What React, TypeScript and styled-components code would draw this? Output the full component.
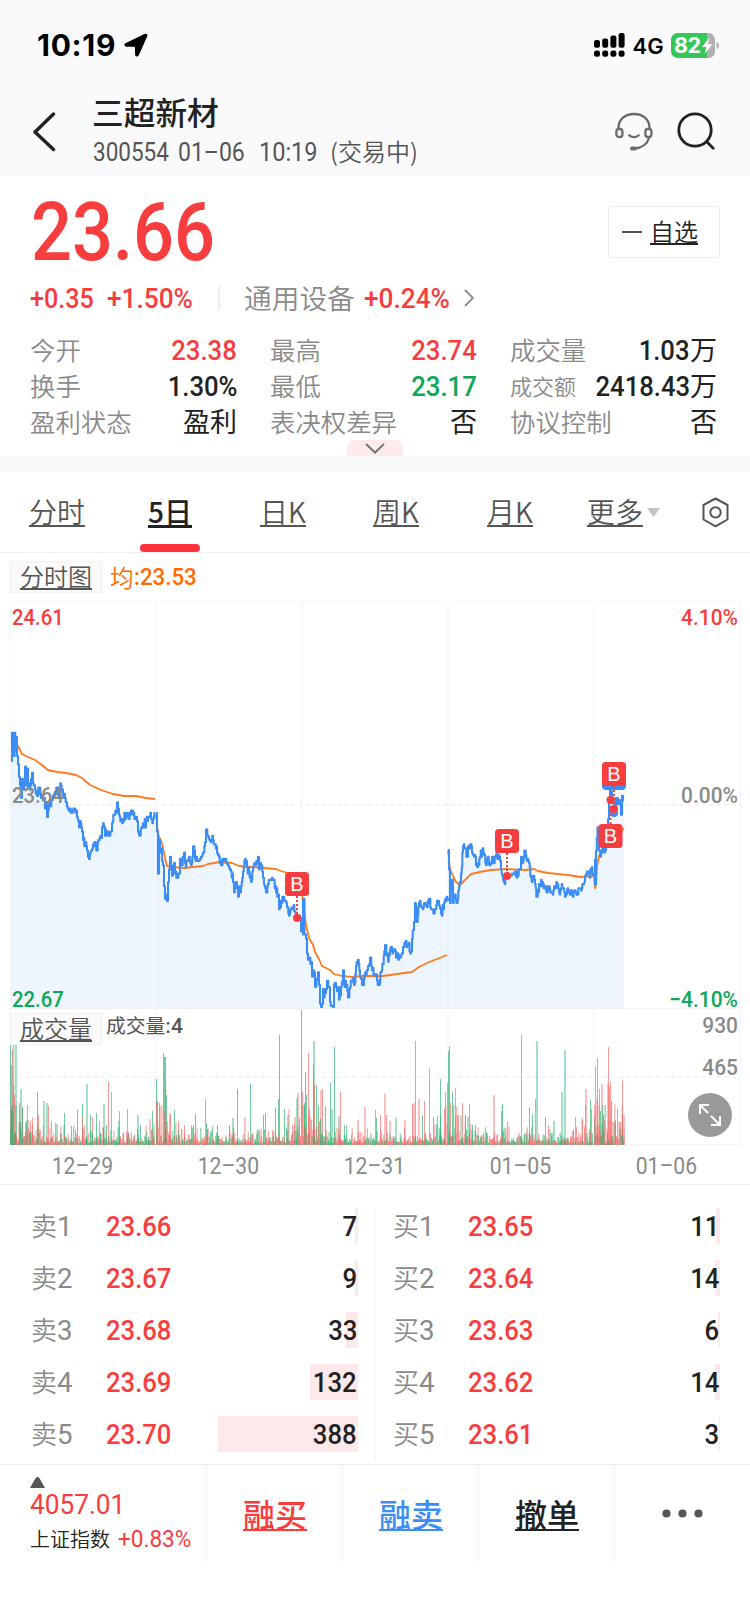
import React from "react";
import styled, { createGlobalStyle } from "styled-components";

const RED = "#f73d3d";
const GREEN = "#0aa858";
const BLUE = "#3c8df5";
const ORANGE = "#ff6a00";
const INK = "#222";
const MID = "#555";
const GREY = "#8a8a8a";
const NUM = `Roboto, "Noto Sans CJK SC", sans-serif`;
const CJK = `"Noto Sans CJK SC", sans-serif`;

const GlobalStyle = createGlobalStyle`
  * { box-sizing: border-box; }
  body { margin: 0; background: #fff; font-family: ${CJK}; color: ${INK}; }
`;

const Page = styled.div`
  width: 750px;
  height: 1624px;
  display: flex;
  flex-direction: column;
  overflow: hidden;
  background: #fff;
`;

/* Condensed figures, narrowed towards the edge they are aligned to. */
const Num = styled.span<{
  $size?: number;
  $color?: string;
  $weight?: number;
  $narrow?: number;
  $to?: "left" | "right" | "center";
}>`
  display: inline-block;
  font-family: ${NUM};
  font-size: ${(p) => p.$size ?? 28.5}px;
  font-weight: ${(p) => p.$weight ?? 500};
  color: ${(p) => p.$color ?? "inherit"};
  transform: scaleX(${(p) => p.$narrow ?? 0.9});
  transform-origin: ${(p) => p.$to ?? "left"} center;
  white-space: nowrap;
`;

/* ---------- status bar and header ---------- */

const StatusBar = styled.div`
  flex: none;
  height: 88px;
  padding: 2px 30.5px 0 37px;
  display: flex;
  align-items: center;
  background: #fafafc;
  color: #000;
  font-family: Inter, sans-serif;
`;
const Clock = styled.span`
  width: 87px;
  font-size: 30px;
  line-height: 30px;
  font-weight: 700;
  letter-spacing: 0.7px;
`;
const StatusRight = styled.div`
  margin-left: auto;
  display: flex;
  align-items: center;
`;
const Network = styled.span`
  margin: 2px 8px 0 8px;
  width: 30px;
  font-size: 22px;
  font-weight: 600;
`;

const Header = styled.header`
  flex: none;
  height: 88px;
  padding: 0 35px 0 32px;
  display: flex;
  align-items: flex-start;
  background: #fafafc;
`;
const TitleBlock = styled.div`
  margin-left: 36px;
  flex: 1;
`;
const Title = styled.h1`
  margin: 0;
  font-size: 31.7px;
  line-height: 46px;
  font-weight: 500;
`;
const Subtitle = styled.div`
  display: flex;
  height: 36px;
  align-items: center;
  padding-left: 1px;
  color: ${MID};
`;
const SubPart = styled.div<{ $w: number }>`
  width: ${(p) => p.$w}px;
`;
const Session = styled.span`
  font-family: ${CJK};
  font-size: 24px;
  line-height: 30px;
  margin: -3px 0 0 2px;
  font-weight: 350;
`;
const HeaderIcons = styled.div`
  display: flex;
  gap: 24px;
  padding-top: 24px;
`;

/* ---------- quote ---------- */

const Quote = styled.section`
  position: relative;
  flex: none;
  height: 280px;
  padding: 16px 30px 0;
`;
const PriceRow = styled.div`
  display: flex;
  height: 80px;
  justify-content: space-between;
`;
const BigPrice = styled(Num)`
  line-height: 81px;
  margin-left: 1px;
`;
const WatchButton = styled.button`
  margin: 14px 0 0;
  width: 112px;
  height: 52px;
  padding: 0 0 0 13px;
  display: flex;
  align-items: center;
  gap: 8px;
  border: 1px solid #ebebeb;
  border-radius: 4px;
  background: #fff;
`;
const Dash = styled.i`
  width: 20px;
  height: 2px;
  background: ${MID};
`;
const Underlined = styled.span<{ $size: number; $color?: string; $weight?: number; $line?: number }>`
  display: inline-block;
  font-family: ${CJK};
  font-size: ${(p) => p.$size}px;
  line-height: ${(p) => p.$size}px;
  font-weight: ${(p) => p.$weight ?? 350};
  color: ${(p) => p.$color ?? MID};
  border-bottom: ${(p) => p.$line ?? 2}px solid currentColor;
  white-space: nowrap;
`;
const ChangeRow = styled.div`
  display: flex;
  height: 52px;
  align-items: center;
  color: ${RED};
`;
const ChangePart = styled.div<{ $w: number }>`
  width: ${(p) => p.$w}px;
`;
const Rule = styled.i`
  width: 2px;
  height: 24px;
  margin-right: 24px;
  background: #ececec;
`;
const Sector = styled.span`
  width: 120px;
  font-size: 27.7px;
  line-height: 40px;
  margin-top: -3px;
  font-weight: 350;
  color: ${GREY};
`;
const Stats = styled.div`
  margin-top: 8px;
  display: grid;
  grid-template-columns: repeat(3, 207px);
  column-gap: 33px;
  grid-auto-rows: 36px;
`;
const Stat = styled.div`
  display: flex;
  align-items: center;
  line-height: 36px;
  padding-bottom: 2px;
`;
const StatValue = styled(Num)`
  margin-top: 3px;
`;
const StatLabel = styled.span<{ $size: number }>`
  flex: 1;
  white-space: nowrap;
  font-size: ${(p) => p.$size}px;
  font-weight: 350;
  color: ${GREY};
`;
const PullTab = styled.div`
  position: absolute;
  left: 347px;
  bottom: 0;
  width: 56px;
  height: 16px;
  display: flex;
  justify-content: center;
  border-radius: 8px 8px 0 0;
  background: #fdebeb;
`;
const Spacer = styled.div`
  flex: none;
  height: 16px;
  background: #f9f9fb;
`;

/* ---------- tabs ---------- */

const Tabs = styled.nav`
  flex: none;
  height: 81px;
  display: grid;
  grid-template-columns: 114px 112px 114px 112px 116px 182px;
  border-bottom: 1px solid #f0f0f0;
`;
const Tab = styled.div`
  display: flex;
  flex-direction: column;
  align-items: center;
  justify-content: space-between;
  padding-top: 25px;
`;
const Indicator = styled.i`
  width: 60px;
  height: 8px;
  border-radius: 4px;
  background: #fd323d;
`;
const MoreTab = styled.div`
  display: flex;
  align-items: flex-start;
  padding: 25px 0 0 19px;
`;

/* ---------- chart ---------- */

const LegendRow = styled.div`
  flex: none;
  height: 47px;
  padding: 8px 10px;
  display: flex;
  align-items: center;
`;
const LegendBox = styled.div`
  width: 92px;
  height: 32px;
  display: flex;
  justify-content: center;
  align-items: center;
  border: 1px solid #f2f2f2;
  background: #fafafa;
`;
const Average = styled.div`
  margin: 1px 0 0 8px;
  display: flex;
  align-items: center;
  font-size: 23.7px;
  line-height: 32px;
  font-weight: 350;
  color: ${ORANGE};
`;
const ChartArea = styled.div`
  position: relative;
  flex: none;
  height: 546px;
`;
const VolumeLegend = styled.div`
  position: absolute;
  left: 10px;
  top: 413px;
  display: flex;
  gap: 4px;
`;
const VolumeText = styled.span`
  font-size: 19.8px;
  line-height: 24px;
  font-weight: 400;
  color: ${MID};
`;
const Dates = styled.div`
  flex: none;
  height: 39px;
  padding: 3px 11px 0 9px;
  display: grid;
  grid-template-columns: repeat(5, 146px);
  align-items: center;
  justify-items: center;
  border-bottom: 1px solid #eee;
  color: ${GREY};
`;

/* ---------- order book ---------- */

const Book = styled.section`
  flex: none;
  height: 279px;
  padding: 23px 30px 3px;
  display: grid;
  grid-template-columns: 328px 34px 328px;
`;
const Divider = styled.i`
  justify-self: center;
  width: 1px;
  margin-left: 1px;
  background: #f3f3f3;
`;
const Side = styled.div`
  display: flex;
  flex-direction: column;
  gap: 16px;
`;
const Level = styled.div`
  display: flex;
  height: 36px;
  align-items: center;
`;
const LevelName = styled.div`
  width: 76px;
  display: flex;
  align-items: center;
  padding-left: 1px;
  color: ${GREY};
`;
const Han = styled.span<{ $size: number; $weight?: number; $up?: number }>`
  font-family: ${CJK};
  font-size: ${(p) => p.$size}px;
  line-height: 36px;
  font-weight: ${(p) => p.$weight ?? 350};
  margin-top: ${(p) => -(p.$up ?? 0)}px;
`;
const Depth = styled.div<{ $bar: number }>`
  flex: 1;
  height: 36px;
  line-height: 37px;
  padding-right: 1px;
  text-align: right;
  background: linear-gradient(#fee9ea, #fee9ea) right / ${(p) => p.$bar}px 100% no-repeat;
`;

/* ---------- bottom bar ---------- */

const Bottom = styled.footer`
  flex: none;
  height: 99px;
  display: grid;
  grid-template-columns: 207px repeat(4, 136px);
  border-top: 1px solid #ececec;
`;
const Index = styled.div`
  padding: 12px 0 0 30px;
  display: flex;
  flex-direction: column;
  border-right: 1px solid #f2f2f2;
`;
const IndexValue = styled(Num)`
  line-height: 32px;
  margin-top: 1px;
`;
const IndexName = styled.div`
  display: flex;
  align-items: center;
  gap: 8px;
  height: 36px;
`;
const Action = styled.div`
  display: flex;
  justify-content: center;
  align-items: flex-start;
  padding: 32px 0 0 1px;
  border-right: 1px solid #f2f2f2;
  &:last-child { border-right: 0; padding: 44px 0 0; }
`;

/* ---------- chart data ---------- */

type Pt = [number, number];
const parse = (s: string): Pt[] =>
  s.trim().split(/\s+/).map((p) => p.split(",").map(Number) as Pt);

const rand = (seed: number) => {
  let s = seed;
  return () => {
    s = (s * 1664525 + 1013904223) % 4294967296;
    return s / 4294967296;
  };
};

const PRICE = [
  parse(`11,761 12,732 12.6,754 13.3,733 14,756 14.6,732 15.3,750 16,737 17,757 18,765 19,778 20,786 21,798 22,780 23,790 24,780 25,767 26,785 27,769 28,787 30,785 31,779 32,772 33,784 35,789 37,796 39,788 41,797 43,800 44,798 45,808 46,802 47,817 48,810 50,803 52,800 55,792 57,789 59,796 61,785 63,796 65,797 67,807 70,809 72,813 76,811 77,817 79,828 80,822 82,832 83,840 85,845 87,850 88,856 89,858 91,850 93,844 95,842 97,850 99,839 101,838 102,828 103,824 105,835 107,831 109,836 111,832 112,824 114,815 116,812 117,803 118,808 119,815 121,818 123,820 125,815 127,812 129,818 131,811 133,815 135,820 137,822 138,831 140,836 142,828 144,824 146,822 148,816 151,818 153,820 155,813`),
  parse(`156,813 157,832 158,873 159,840 160,852 161,848 162,860 163,865 164,887 165,898 166,895 167,900 168,883 169,870 170,857 171,866 172,876 173,866 174,864 175,873 177,877 179,873 180,859 182,866 184,852 185,863 187,862 189,857 191,866 193,847 195,858 197,860 199,860 201,856 203,853 205,843 206,829 208,836 210,841 213,839 215,845 217,852 219,857 221,865 224,862 227,863 229,868 231,871 233,881 234,892 236,883 237,887 238,896 239,886 240,893 241,887 243,872 245,859 247,868 249,872 251,881 253,868 255,865 257,864 258,857 259,869 261,865 263,877 264,885 266,893 268,884 270,880 272,877 274,880 276,893 278,894 279,909 281,901 283,896 285,901 287,908 289,915 291,909 293,910 295,911 297,918 299,916 300,918 301,932`),
  parse(`302,900 303,934 303.6,898 304.5,935 306,939 307,953 308,960 309,957 311,962 312,977 314,972 315,988 317,978 318,972 319,985 320,1003 321,1007 322,1003 323,990 324,997 326,989 327,981 329,988 330,1001 332,1006 333,1007 334,985 336,987 337,992 338,987 339,999 341,988 343,970 344,985 346,984 348,997 350,987 352,980 354,985 356,966 358,960 360,976 362,984 364,979 366,975 368,965 370,958 372,970 375,975 377,981 379,985 381,972 383,964 385,945 387,954 388,962 390,950 394,950 396,958 399,957 401,955 403,947 405,944 408,946 411,951 412,938 414,922 415,902 417,921 419,903 422,907 424,903 427,907 429,898 431,910 434,914 437,900 439,905 441,914 444,903 446,900 448,900`),
  parse(`448,850 449,870 450,903 452,880 453,902 455,895 457,903 459,886 461,874 463,847 465,849 467,857 468,847 470,844 472,853 474,857 478,864 480,857 482,851 484,855 486,865 488,857 490,865 492,857 494,863 496,854 498,857 500,862 501,870 503,880 504,883 506,877 508,874 510,876 514,874 518,876 520,870 521,856 523,860 525,851 527,862 529,864 531,877 533,876 535,884 537,897 539,885 541,880 543,884 546,891 549,887 552,893 554,886 557,884 559,892 561,888 563,889 565,897 567,890 569,893 572,894 575,890 577,894 579,888 581,890 583,885 585,876 587,872 589,874 591,870 593,875`),
  parse(`594,860 595,884 596,850 597.5,828 599,851 601,853 603,848 605,850 606,846 608,820 609,800 610,785 611,792 612,801 613,798 615,812 616,797 617,797 618,805 619,801 620,805 621,815 622,795 623,801 624,800`),
];
const TICK = 2.1;
// Minute prices move in whole ticks around the listed turning points.
const pricePath = (pts: Pt[], seed: number) => {
  const r = rand(seed);
  let d = `M${pts[0][0]},${pts[0][1]}`;
  for (let i = 1; i < pts.length; i++) {
    const [x0, y0] = pts[i - 1];
    const [x1, y1] = pts[i];
    const n = Math.max(1, Math.round((x1 - x0) / 0.7));
    for (let k = 1; k <= n; k++) {
      const t = k / n;
      const jitter = k === n ? 0 : (r() - 0.5) * 9;
      const y = Math.min(1007, Math.round((y0 + (y1 - y0) * t + jitter) / TICK) * TICK);
      const x = x0 + (x1 - x0) * t;
      d += ` H${x.toFixed(1)} V${y.toFixed(1)}`;
    }
  }
  return d;
};
const PRICE_PATHS = PRICE.map((p, i) => pricePath(p, 17 + i * 31));

const AVERAGE = [
  "M16,745 L18,746 22,754 28,757 35,760 42,765 48,770 57,772 66,773 76,775 82,778 90,785 101,790 113,794 124,796 136,796 146,798 155,799",
  "M156,815 L158,834 162,843 165,858 167,866 172,867 185,868 193,867 203,866 208,864 220,862 232,863 239,866 251,867 264,868 276,869 281,871 288,873 296,880 301,892",
  "M302,893 L304,910 306,925 309,938 313,945 315,952 319,959 322,966 330,970 334,974 342,976 352,977 363,976 383,976 397,974 412,972 419,967 427,963 437,959 447,955",
  "M448,850 L450,869 453,876 456,882 460,885 463,882 467,878 471,874 480,872 491,870 506,869 526,870 534,869 538,871 548,873 558,874 568,875 580,877 594,876",
  "M594,875 L595,888 596,885 597,866 599,856 603,852 608,846 614,838 624,828",
];

type Bar = { x: number; h: number; c: string; w: number; o: number };
const spikes = (s: string): Bar[] =>
  s.trim().split(/\s+/).map((t) => {
    const [k, x, h] = t.split(":");
    return {
      x: Number(x),
      h: Number(h),
      c: k[0] === "r" ? "#f76262" : "#22b06c",
      w: k.length > 1 ? 2 : 1,
      o: k.length > 1 ? 0.4 : 0.65,
    };
  });
const SPIKES = spikes(`
g:10:100 r:11:80 r:12:95 gg:12.5:106 gg:15:108 r:13:60 r:14:50 g:19:42 gg:20:56 r:22:38 gg:25:22 r:27:40 r:30:24 r:32:20 g:37:53 r:38:30
gg:43:44 gg:46:42 r:48:39 r:51:24 r:55:22 gg:56:21 g:64:32 g:71:19 g:77:35 g:82:41 r:82:27 gg:86:61 g:90:30 r:92:28 g:96:32 r:99:24
gg:103:41 g:106:20 r:108:64 r:111:53 gg:118:24 r:119:34 r:127:36 gg:137:30 g:140:20 rr:149:26 g:152:34
g:156:66 g:157:44 r:156:44 r:159:42 g:163:92 g:164:88 g:165:88 g:166:50 r:165:60 rr:169:32 g:174:35 r:178:24 r:184:20 r:191:20 g:195:31 r:205:46 g:206:22 g:217:20
gg:232:27 g:237:56 rr:244:28 g:250:61 g:229:20 gg:257:16 g:263:30 g:265:32 g:275:37 g:279:110 g:278:46 g:284:36 gg:287:30 rr:294:28 gg:296:47 rr:297:52 g:299:27
g:301:135 r:302:53 g:304:42 g:305:73 r:308:92 g:306:50 r:309:36 gg:313:104 g:313:80 r:314:61 g:316:60 g:318:40 rr:320:55 r:322:56 g:325:39 g:330:62 gg:331:36 g:334:98 r:340:53
gg:338:29 g:344:20 rr:357:25 rr:364:38 r:375:35 g:376:27 r:380:30 rr:384:51 r:386:30 rr:389:24 gg:395:27 rr:404:25 r:412:41 rr:413:42 r:415:104 rr:418:46 g:422:30 r:424:44 r:429:77 g:433:28 g:440:66 r:444:36 r:445:53
r:447:62 g:448:94 g:449:99 g:452:53 r:450:42 r:455:57 rr:457:30 g:465:30 r:462:42 gg:467:28 r:469:41 g:472:20 rr:493:50 g:501:34 g:502:41 r:507:24 r:521:110 g:529:38 g:532:31 r:535:46 gg:536:104 g:545:28 r:548:20 gg:553:24
gg:561:53 gg:564:95 r:575:28 r:582:25 rr:585:56 g:590:45 r:591:36
r:595:79 r:597:87 g:594:28 r:599:56 rr:596:46 rr:601:61 g:600:34 g:603:30 r:608:98 rr:607:62 r:610:63 g:611:44 r:609:58 g:615:25 r:617:37 g:622:31 r:622:65 rr:623:30`);

const NOISE: Bar[] = (() => {
  const r = rand(913);
  const out: Bar[] = [];
  for (let x = 10; x < 623.5; x += 0.608) {
    const inDay = (x - 10) % 146;
    if (inDay > 144.6) continue;
    const open = Math.exp(-inDay / 12);
    const close = inDay > 132 ? 6 : 0;
    const h = 2 + -Math.log(1 - r() * 0.97) * (5 + open * 14 + close + (x > 594 ? 8 : 0));
    out.push({ x, h: Math.min(h, 40), c: r() > 0.4 ? "#f96a6a" : "#22b06c", w: 1, o: 0.7 });
  }
  return out;
})();

const MARKERS = [
  { bx: 297, by: 884, dx: 297, dy: 918 },
  { bx: 507, by: 841, dx: 507, dy: 876 },
  { bx: 614, by: 774, dx: 614, dy: 809 },
  { bx: 610.5, by: 836, dx: 610.5, dy: 800 },
];

const AXIS_LABELS = [
  { x: 12, y: 624.5, t: "24.61", c: RED },
  { x: 12, y: 803, t: "23.64", c: GREY },
  { x: 12, y: 1007, t: "22.67", c: GREEN },
  { x: 738, y: 624.5, t: "4.10%", c: RED, end: true },
  { x: 738, y: 803, t: "0.00%", c: GREY, end: true },
  { x: 738, y: 1007, t: "−4.10%", c: GREEN, end: true },
  { x: 738, y: 1033, t: "930", c: GREY, end: true },
  { x: 738, y: 1075, t: "465", c: GREY, end: true },
];

function Chart() {
  return (
    <svg width="750" height="546" viewBox="0 600 750 546" style={{ display: "block" }}>
      <g stroke="#f5f6f7" strokeWidth="1" fill="none">
        <path d="M10,601.5 H740 M10,1008.5 H740 M10,1144.5 H740" />
        <path d="M10.5,601 V1145 M156,601 V1145 M302,601 V1145 M448,601 V1145 M594,601 V1145 M740.5,601 V1145" strokeWidth="1.2" />
        <path d="M10,804.7 H740 M10,1077 H740" strokeDasharray="4 3.6" strokeWidth="1.6" stroke="#f0f0f1" />
      </g>
      {PRICE_PATHS.map((d, i) => {
        const pts = PRICE[i];
        return <path key={i} d={`${d} V1008.5 H${pts[0][0]} Z`} fill="#3c92f0" fillOpacity="0.09" />;
      })}
      {AVERAGE.map((d, i) => (
        <path key={i} d={d} fill="none" stroke="#ff7a1e" strokeWidth="1.8" strokeLinejoin="round" />
      ))}
      {PRICE_PATHS.map((d, i) => (
        <path key={i} d={d} fill="none" stroke={BLUE} strokeWidth="2.1" strokeLinejoin="round" />
      ))}
      {[...SPIKES, ...NOISE].map((b, i) => (
        <rect key={i} x={b.x} y={1145 - b.h} width={b.w} height={b.h} fill={b.c} fillOpacity={b.o} />
      ))}
      {AXIS_LABELS.map((l) => (
        <text
          key={l.t}
          transform={`translate(${l.x} ${l.y}) scale(${l.end ? 0.93 : 0.9} 1)`}
          fill={l.c}
          textAnchor={l.end ? "end" : "start"}
          fontFamily="Roboto, sans-serif"
          fontSize="22.5"
          fontWeight="500"
        >
          {l.t}
        </text>
      ))}
      <rect x="602" y="766" width="24" height="24" rx="4" fill={BLUE} />
      <circle cx="614" cy="813" r="4" fill={BLUE} />
      {MARKERS.map((m) => (
        <g key={`${m.bx}`}>
          <path d={`M${m.bx},${m.by} V${m.dy}`} stroke={RED} strokeWidth="2" strokeDasharray="2 2" />
          <circle cx={m.dx} cy={m.dy} r="4" fill={RED} />
          <rect x={m.bx - 12} y={m.by - 12} width="24" height="24" rx="3.5" fill={RED} />
          <text x={m.bx} y={m.by + 6.5} textAnchor="middle" fill="#fff" fontFamily="Liberation Sans, sans-serif" fontSize="20">
            B
          </text>
        </g>
      ))}
      <circle cx="710" cy="1115" r="22" fill="#999" />
      <path
        d="M700,1114 V1105 H709 M700,1105 L708,1113 M720,1116 V1125 H711 M720,1125 L711,1116"
        fill="none"
        stroke="#fff"
        strokeWidth="2"
      />
    </svg>
  );
}

/* ---------- icons ---------- */

const LocationArrow = () => (
  <svg width="24" height="24" viewBox="0 0 24 24">
    <path
      d="M1.8,11 L21.3,1.6 Q23,1.2 22.4,3 L14,21.8 Q12.8,23.6 12,21.8 L11.8,12.8 L2.4,12.8 Q0.4,12 1.8,11 Z"
      fill="#000"
      stroke="#000"
      strokeWidth="1.8"
      strokeLinejoin="round"
    />
  </svg>
);
const Signal = () => (
  <svg width="31" height="24" viewBox="0 0 31 24">
    {[7, 5.5, 2.5, 0].map((y, i) => (
      <g key={i}>
        <rect x={i * 8.2} y={y} width="6" height={14.8 - y} rx="2.2" />
        <rect x={i * 8.2} y="17.4" width="6" height="6.4" rx="2.4" />
      </g>
    ))}
  </svg>
);
const Battery = () => (
  <svg width="49" height="25" viewBox="0 0 49 25">
    <path d="M8,0 H37 Q44,0 44,8 V17 Q44,25 37,25 H8 Q0,25 0,17 V8 Q0,0 8,0Z" fill="#b1b1b4" />
    <path d="M8,0 H36 V25 H8 Q0,25 0,17 V8 Q0,0 8,0Z" fill="#35c759" />
    <path d="M45.5,9 Q48,10 48,12.5 Q48,15 45.5,16Z" fill="#b1b1b4" />
    <text x="3" y="20" fontFamily="Inter, sans-serif" fontWeight="700" fontSize="21.5" letterSpacing="-0.4" fill="#fff">82</text>
    <path d="M38.5,4.5 L31,14 H35.3 L33.5,21 L41.5,11.3 H36.8 Z" fill="#fff" />
  </svg>
);
const Back = () => (
  <svg width="24" height="40" viewBox="0 0 24 40" style={{ marginTop: 24 }}>
    <path d="M21.5,2 L3,20 L21.5,37.5" fill="none" stroke="#222" strokeWidth="3.4" strokeLinecap="round" strokeLinejoin="round" />
  </svg>
);
const Headset = () => (
  <svg width="38" height="39" viewBox="0 0 38 39" fill="none" stroke="#6b6b6e" strokeWidth="2.3" strokeLinecap="round">
    <path d="M3.4,16.5 C3.4,7 10.5,2 19,2 S34.6,7 34.6,16.5" />
    <rect x="1.4" y="17" width="6" height="8" rx="2.5" />
    <rect x="30.4" y="17" width="6" height="8" rx="2.5" />
    <path d="M34,26 C32,33 26,36 19,36.5" />
    <path d="M17,36.5 H20" strokeWidth="4" />
    <path d="M14.3,23.3 Q19,27 23.7,23.3" />
  </svg>
);
const Search = () => (
  <svg width="38" height="38" viewBox="0 0 38 38" fill="none" stroke="#222" strokeWidth="2.8" strokeLinecap="round">
    <circle cx="18" cy="18" r="16.2" />
    <path d="M30.5,30.5 L36.2,36.2" />
  </svg>
);
const Hexagon = () => (
  <svg width="27" height="31" viewBox="0 0 27 31" fill="none" stroke={MID} strokeWidth="2" style={{ marginLeft: 41.5 }}>
    <path d="M13.5,1.5 L25.5,8 V22.5 L13.5,29.3 L1.5,22.5 V8 Z" strokeLinejoin="round" />
    <circle cx="13.5" cy="15.4" r="5.2" />
  </svg>
);

/* ---------- content ---------- */

const STATS = [
  { l: "今开", v: "23.38", c: RED },
  { l: "最高", v: "23.74", c: RED },
  { l: "成交量", v: "1.03", unit: "万" },
  { l: "换手", v: "1.30%" },
  { l: "最低", v: "23.17", c: GREEN },
  { l: "成交额", v: "2418.43", unit: "万", small: true },
  { l: "盈利状态", han: "盈利" },
  { l: "表决权差异", han: "否" },
  { l: "协议控制", han: "否" },
];
const SELLS = [["23.66", 7, 3], ["23.67", 9, 3], ["23.68", 33, 12], ["23.69", 132, 48], ["23.70", 388, 140]] as const;
const BUYS = [["23.65", 11, 4], ["23.64", 14, 5], ["23.63", 6, 2], ["23.62", 14, 5], ["23.61", 3, 1]] as const;

const Levels = ({ name, rows }: { name: string; rows: readonly (readonly [string, number, number])[] }) => (
  <Side>
    {rows.map(([price, qty, bar], i) => (
      <Level key={i}>
        <LevelName>
          <Han $size={26} $up={3}>{name}</Han>
          <Num $weight={400} $narrow={0.97}>{i + 1}</Num>
        </LevelName>
        <Num $color={RED}>{price}</Num>
        <Depth $bar={bar}>
          <Num $to="right">{qty}</Num>
        </Depth>
      </Level>
    ))}
  </Side>
);

export default function App() {
  return (
    <Page>
      <GlobalStyle />
      <StatusBar>
        <Clock>10:19</Clock>
        <LocationArrow />
        <StatusRight>
          <Signal />
          <Network>4G</Network>
          <Battery />
        </StatusRight>
      </StatusBar>
      <Header>
        <Back />
        <TitleBlock>
          <Title>三超新材</Title>
          <Subtitle>
            <SubPart $w={85}><Num $size={25} $weight={400} $narrow={0.9}>300554</Num></SubPart>
            <SubPart $w={81}><Num $size={25} $weight={400} $narrow={0.92}>01–06</Num></SubPart>
            <SubPart $w={69}><Num $size={25} $weight={400} $narrow={0.94}>10:19</Num></SubPart>
            <Session>(交易中)</Session>
          </Subtitle>
        </TitleBlock>
        <HeaderIcons>
          <Headset />
          <Search />
        </HeaderIcons>
      </Header>

      <Quote>
        <PriceRow>
          <BigPrice $size={82} $color={RED} $narrow={0.88}>23.66</BigPrice>
          <WatchButton>
            <Dash />
            <Underlined $size={24} $color={INK}>自选</Underlined>
          </WatchButton>
        </PriceRow>
        <ChangeRow>
          <ChangePart $w={77}><Num $narrow={0.88}>+0.35</Num></ChangePart>
          <ChangePart $w={111}><Num $narrow={0.92}>+1.50%</Num></ChangePart>
          <Rule />
          <Sector>通用设备</Sector>
          <ChangePart $w={100}><Num $narrow={0.92}>+0.24%</Num></ChangePart>
          <svg width="10" height="18" viewBox="0 0 10 18">
            <path d="M1,1 L9,9 L1,17" fill="none" stroke="#8a8a8a" strokeWidth="1.8" />
          </svg>
        </ChangeRow>
        <Stats>
          {STATS.map((s) => (
            <Stat key={s.l}>
              <StatLabel $size={s.small ? 22 : 25.4}>{s.l}</StatLabel>
              {s.han ? (
                <Han $size={27} $weight={400}>{s.han}</Han>
              ) : (
                <>
                  <StatValue $color={s.c} $to="right" $narrow={0.9}>{s.v}</StatValue>
                  {s.unit && <Han $size={27} $weight={400}>{s.unit}</Han>}
                </>
              )}
            </Stat>
          ))}
        </Stats>
        <PullTab>
          <svg width="20" height="16" viewBox="0 0 20 16">
            <path d="M1,4 L10,12.5 L19,4" fill="none" stroke="#777" strokeWidth="2" />
          </svg>
        </PullTab>
      </Quote>
      <Spacer />

      <Tabs>
        <Tab><Underlined $size={28}>分时</Underlined></Tab>
        <Tab>
          <Underlined $size={28} $color={INK} $weight={500} $line={3}>5日</Underlined>
          <Indicator />
        </Tab>
        <Tab><Underlined $size={28}>日K</Underlined></Tab>
        <Tab><Underlined $size={28}>周K</Underlined></Tab>
        <Tab><Underlined $size={28}>月K</Underlined></Tab>
        <MoreTab>
          <Underlined $size={28}>更多</Underlined>
          <svg width="13" height="9" viewBox="0 0 13 9" style={{ margin: "11px 0 0 4px" }}>
            <path d="M0,0 H13 L6.5,9 Z" fill="#c4c4c4" />
          </svg>
          <Hexagon />
        </MoreTab>
      </Tabs>

      <LegendRow>
        <LegendBox><Underlined $size={24}>分时图</Underlined></LegendBox>
        <Average>
          <span>均</span>
          <Num $size={24.5} $narrow={0.91}>:23.53</Num>
        </Average>
      </LegendRow>
      <ChartArea>
        <Chart />
        <VolumeLegend>
          <LegendBox><Underlined $size={24}>成交量</Underlined></LegendBox>
          <VolumeText>成交量<Num $size={21} $narrow={1}>:4</Num></VolumeText>
        </VolumeLegend>
      </ChartArea>
      <Dates>
        {["12–29", "12–30", "12–31", "01–05", "01–06"].map((d) => (
          <Num key={d} $size={23} $weight={400} $narrow={0.92} $to="center">{d}</Num>
        ))}
      </Dates>

      <Book>
        <Levels name="卖" rows={SELLS} />
        <Divider />
        <Levels name="买" rows={BUYS} />
      </Book>

      <Bottom>
        <Index>
          <svg width="15" height="11" viewBox="0 0 15 11">
            <path d="M5.6,1 Q7.5,-0.8 9.4,1 L15,11 H0 Z" fill={MID} />
          </svg>
          <IndexValue $color={RED} $weight={400} $narrow={0.92}>4057.01</IndexValue>
          <IndexName>
            <Han $size={20} $up={1}>上证指数</Han>
            <Num $size={23} $color={RED} $weight={400} $narrow={0.98}>+0.83%</Num>
          </IndexName>
        </Index>
        <Action><Underlined $size={32} $color={RED} $weight={500}>融买</Underlined></Action>
        <Action><Underlined $size={32} $color={BLUE} $weight={500}>融卖</Underlined></Action>
        <Action><Underlined $size={32} $color={INK} $weight={500}>撤单</Underlined></Action>
        <Action>
          <svg width="42" height="9" viewBox="0 0 42 9" fill={MID}>
            <circle cx="4.5" cy="4.5" r="4.1" />
            <circle cx="20.5" cy="4.5" r="4.1" />
            <circle cx="36.5" cy="4.5" r="4.1" />
          </svg>
        </Action>
      </Bottom>
    </Page>
  );
}
